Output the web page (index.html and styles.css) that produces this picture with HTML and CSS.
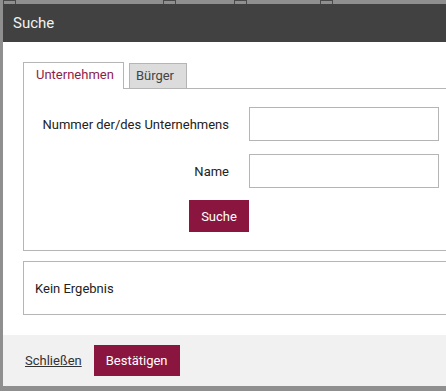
FILE: index.html
```html
<!DOCTYPE html>
<html lang="de">
<head>
  <meta charset="UTF-8">
  <meta name="viewport" content="width=device-width, initial-scale=1.0">
  <title>Suche</title>
  <link rel="stylesheet" href="styles.css">
</head>
<body>
  <!-- page behind the overlay -->
  <div class="backdrop">
    <div class="cell-tabs">
      <span class="cell-tab first"></span>
      <span class="cell-tab second"></span>
      <span class="cell-tab third"></span>
      <span class="cell-tab fourth"></span>
    </div>
  </div>

  <div class="dialog">
    <div class="dialog-header">Suche</div>

    <div class="dialog-body">
      <div class="tabs">
        <div class="tab active">Unternehmen</div>
        <div class="tab">Bürger</div>
      </div>

      <div class="tab-panel">
        <form class="search-form">
          <label class="field-label" for="nummer">Nummer der/des Unternehmens</label>
          <input class="field-input" id="nummer" type="text">
          <label class="field-label" for="name">Name</label>
          <input class="field-input" id="name" type="text">
          <button class="btn btn-search" type="button">Suche</button>
        </form>
      </div>

      <div class="result-box">Kein Ergebnis</div>
    </div>

    <div class="dialog-footer">
      <a class="link-close" href="#">Schließen</a>
      <button class="btn btn-confirm" type="button">Bestätigen</button>
    </div>
  </div>
</body>
</html>
```

FILE: styles.css
```css
html, body {
  margin: 0;
  padding: 0;
  height: 100%;
  overflow: hidden;
}
body {
  background: #8f8f8f;
  font-family: Roboto, "Liberation Sans", Arial, sans-serif;
  font-size: 13px;
  color: #222;
  position: relative;
}
.backdrop {
  height: 100%;
}
.cell-tabs {
  display: flex;
  height: 4px;
  padding-left: 3px;
}
.cell-tab {
  width: 11px;
  height: 3px;
  border: 1px solid #4a4a4a;
  border-bottom: none;
  box-sizing: content-box;
}
.cell-tab.second { margin-left: 147px; }
.cell-tab.third { margin-left: 58px; }
.cell-tab.fourth { margin-left: 73px; }

/* Dialog sits over the page */
.dialog {
  position: absolute;
  top: 4px;
  left: 3px;
  right: 0;
  height: 382px;
  background: #fff;
  display: flex;
  flex-direction: column;
}
.dialog-header {
  height: 38px;
  line-height: 38px;
  padding-left: 10px;
  background: #414141;
  color: #f2f2f2;
  font-size: 15px;
}
.dialog-body {
  flex: 1;
  padding: 20px 0 0 20px;
}

/* Tabs */
.tabs {
  display: flex;
  align-items: flex-end;
  gap: 5px;
  margin-bottom: -1px;
  position: relative;
  z-index: 1;
}
.tab {
  box-sizing: border-box;
  height: 25px;
  line-height: 24px;
  padding: 0 12px 0 6px;
  border: 1px solid #b5b5b5;
  border-bottom: none;
  background: #dcdcdc;
  color: #444;
  margin-bottom: 1px;
}
.tab.active {
  height: 27px;
  margin-bottom: 0;
  background: #fff;
  color: #8e1d4a;
  padding: 0 9px 0 12px;
}
.tab-panel {
  border: 1px solid #b5b5b5;
  border-right: none;
  padding: 18px 0 18px 0;
}
.search-form {
  display: grid;
  grid-template-columns: 225px 190px;
  row-gap: 13px;
  align-items: center;
  margin: 0;
}
.field-label {
  text-align: right;
  padding-right: 20px;
}
.field-input {
  box-sizing: border-box;
  height: 34px;
  width: 190px;
  border: 1px solid #b5b5b5;
  margin: 0;
  padding: 0 8px;
  font: inherit;
}
.btn {
  border: none;
  background: #8a1640;
  color: #fff;
  font-family: inherit;
  font-size: 13px;
  cursor: pointer;
}
.btn-search {
  grid-column: 1;
  justify-self: end;
  width: 60px;
  height: 32px;
  margin-top: -1px;
}
.result-box {
  margin-top: 10px;
  height: 54px;
  box-sizing: border-box;
  border: 1px solid #b5b5b5;
  border-right: none;
  padding-left: 11px;
  display: flex;
  align-items: center;
}

/* Footer */
.dialog-footer {
  height: 51px;
  background: #f1f1f1;
  display: flex;
  align-items: center;
  gap: 12px;
  padding-left: 22px;
}
.link-close {
  color: #333;
  text-decoration: underline;
}
.btn-confirm {
  height: 31px;
  padding: 0 12px;
}
```
